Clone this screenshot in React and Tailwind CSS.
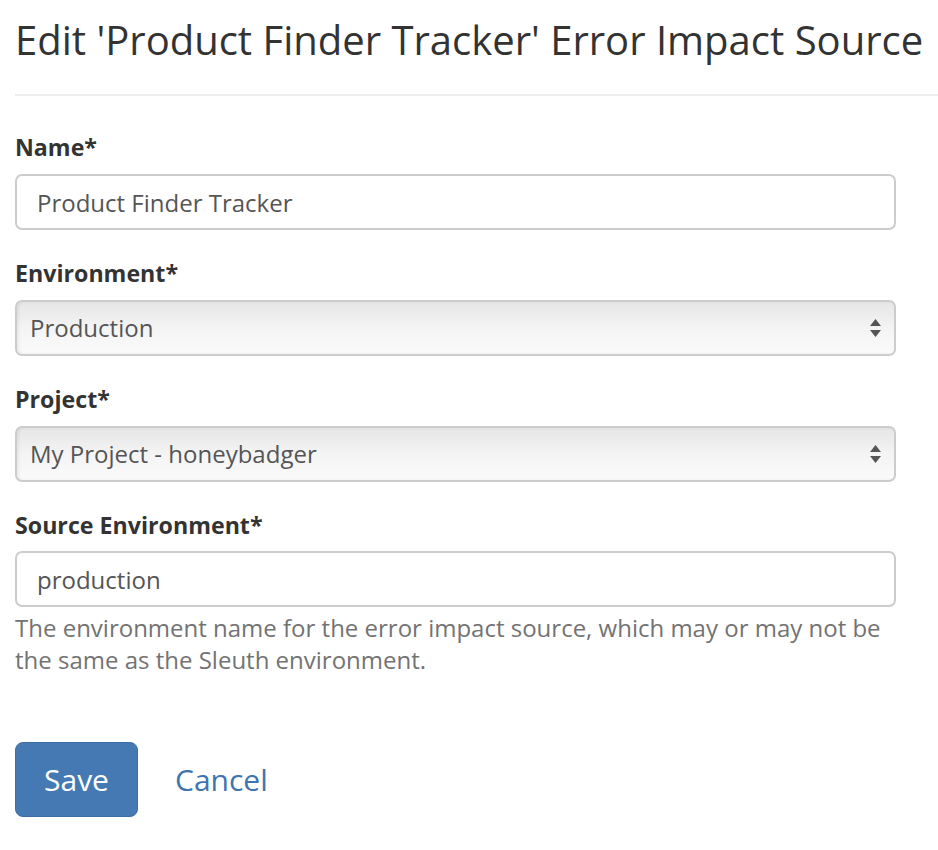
import { useState } from 'react'

function Arrows() {
  return (
    <svg width="11" height="18" viewBox="0 0 11 18" className="absolute right-[13px] top-1/2 -translate-y-1/2">
      <polygon points="5.5,0 11,7 0,7" fill="#555" />
      <polygon points="0,11 11,11 5.5,18" fill="#555" />
    </svg>
  )
}

function Field({ label, children }) {
  return (
    <div className="mb-[27px]">
      <label className="block text-[23.2px] leading-[32px] font-bold text-[#333] mb-[11px]">{label}</label>
      {children}
    </div>
  )
}

function TextInput({ value, onChange }) {
  return (
    <input
      className="block w-full h-[56px] rounded-[7px] border-2 border-[#ccc] bg-white px-[20px] text-[24px] text-[#555] outline-none"
      value={value}
      onChange={e => onChange(e.target.value)}
    />
  )
}

function FakeSelect({ value }) {
  return (
    <div className="relative h-[56px] rounded-[7px] border-2 border-[#ccc] bg-gradient-to-b from-[#e6e6e6] via-[#f4f4f4] to-[#fafafa] shadow-[inset_2px_0_3px_rgba(0,0,0,0.06)] flex items-center pl-[13px] text-[24px] text-[#555]">
      {value}
      <Arrows />
    </div>
  )
}

export default function App() {
  const [name, setName] = useState('Product Finder Tracker')
  const [sourceEnv, setSourceEnv] = useState('production')

  return (
    <div className="min-h-screen bg-white pl-[15px] font-['Open_Sans',sans-serif]">
      <h3 className="pt-[18px] text-[40px] leading-[44px] font-normal text-[#333] whitespace-nowrap">
        Edit 'Product Finder Tracker' Error Impact Source
      </h3>
      <div className="mt-[32px] h-[2px] bg-[#eee]" />

      <form className="w-[881px] pt-[35px]" onSubmit={e => e.preventDefault()}>
        <Field label="Name*">
          <TextInput value={name} onChange={setName} />
        </Field>
        <Field label="Environment*">
          <FakeSelect value="Production" />
        </Field>
        <Field label="Project*">
          <FakeSelect value="My Project - honeybadger" />
        </Field>

        <div>
          <label className="block text-[23.2px] leading-[32px] font-bold text-[#333] mb-[10px]">Source Environment*</label>
          <TextInput value={sourceEnv} onChange={setSourceEnv} />
          <p className="mt-[5px] text-[24px] leading-[32px] text-[#737373]">
            The environment name for the error impact source, which may or may not be the same as the Sleuth environment.
          </p>
        </div>

        {/* Actions */}
        <div className="mt-[66px] flex items-center gap-[37px]">
          <button type="submit" className="w-[123px] h-[75px] rounded-[8px] bg-[#4479b3] border border-[#3c6ea5] text-white text-[30px]">
            Save
          </button>
          <a href="#" className="text-[30px] text-[#3e75b1] no-underline">Cancel</a>
        </div>
      </form>
    </div>
  )
}
